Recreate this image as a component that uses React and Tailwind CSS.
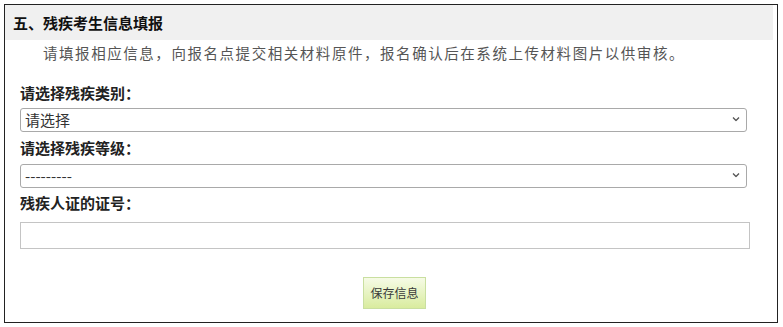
import React from "react";

const font = { fontFamily: '"Noto Sans CJK SC", "Noto Sans", sans-serif' };

function Chevron() {
  return (
    <svg width="8" height="5" viewBox="0 0 8 5" className="pointer-events-none absolute right-[7px] top-1/2 -translate-y-1/2">
      <path d="M1 1 L4 4 L7 1" fill="none" stroke="#555" strokeWidth="1.3" />
    </svg>
  );
}

function Select({ value, className }) {
  return (
    <div className={"relative w-[727px] h-[24px] " + className}>
      <select
        defaultValue={value}
        className="w-full h-full appearance-none border border-[#a9a9a9] rounded-[3px] bg-white pl-[4px] text-[15px] leading-[22px] text-[#333] outline-none"
        style={font}
      >
        <option>{value}</option>
      </select>
      <Chevron />
    </div>
  );
}

export default function App() {
  return (
    <div className="bg-white w-[783px] h-[327px] pt-[4px] pl-[4px]" style={font}>
      <div className="w-[774px] h-[319px] border border-[#222]">
        <div className="h-[35px] mr-[4px] bg-[#f0f0f0] flex items-center pl-[8px]">
          <h2 className="text-[15px] font-bold text-[#111] mt-[1px]">五、残疾考生信息填报</h2>
        </div>
        <p className="mt-[2px] pl-[38px] h-[22px] text-[14.5px] leading-[22px] text-[#555] tracking-[1.55px]">
          请填报相应信息，向报名点提交相关材料原件，报名确认后在系统上传材料图片以供审核。
        </p>
        <div className="pl-[15px]">
          <div className="mt-[18px] h-[22px] text-[15px] leading-[22px] font-bold text-[#222]">请选择残疾类别：</div>
          <Select value="请选择" className="mt-[3px]" />
          <div className="mt-[6px] h-[22px] text-[15px] leading-[22px] font-bold text-[#222]">请选择残疾等级：</div>
          <Select value="---------" className="mt-[4px]" />
          <div className="mt-[5px] h-[22px] text-[15px] leading-[22px] font-bold text-[#222]">残疾人证的证号：</div>
          <input
            type="text"
            className="mt-[8px] block w-[730px] h-[27px] border border-[#c4c4c4] bg-white outline-none"
          />
        </div>
        <div className="mt-[28px] pl-[358px]">
          <button
            className="w-[63px] h-[32px] border border-[#c9dfa0] bg-gradient-to-b from-[#f6fbe6] to-[#d9ec9e] text-[12px] text-[#3a3a3a]"
            style={font}
          >
            保存信息
          </button>
        </div>
      </div>
    </div>
  );
}
